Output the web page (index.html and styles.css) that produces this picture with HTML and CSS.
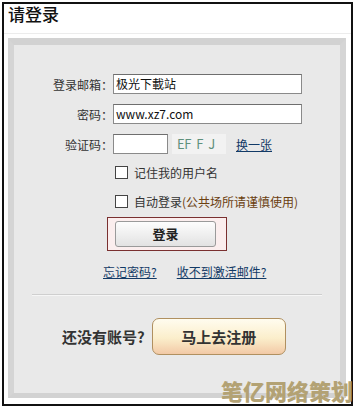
FILE: index.html
```html
<!DOCTYPE html>
<html lang="zh">
<head>
<meta charset="utf-8">
<link rel="stylesheet" href="styles.css">
</head>
<body>
<div class="frame">
  <div class="header"><h1 class="title">请登录</h1></div>
  <div class="panel">
    <div class="form">
      <div class="row">
        <span class="label">登录邮箱：</span>
        <span class="input wide">极光下載站</span>
      </div>
      <div class="row">
        <span class="label">密码：</span>
        <span class="input wide">www.xz7.com</span>
      </div>
      <div class="row">
        <span class="label">验证码：</span>
        <span class="input short"></span>
        <span class="captcha">EF F J</span>
        <a class="link change">换一张</a>
      </div>
      <div class="check-row">
        <span class="box"></span><span class="check-text">记住我的用户名</span>
      </div>
      <div class="check-row second">
        <span class="box"></span><span class="check-text">自动登录<span class="warn">(公共场所请谨慎使用)</span></span>
      </div>
      <div class="btn-wrap">
        <div class="login-btn">登录</div>
      </div>
      <div class="links">
        <a class="link">忘记密码?</a>
        <a class="link">收不到激活邮件?</a>
      </div>
    </div>
    <div class="divider"></div>
    <div class="register">
      <span class="ask">还没有账号?</span>
      <div class="reg-btn">马上去注册</div>
    </div>
  </div>
  <div class="watermark">笔亿网络策划</div>
</div>
</body>
</html>
```
FILE: styles.css
```css
* { box-sizing: border-box; }
html, body { margin: 0; padding: 0; background: #fff; }
body {
  width: 354px; height: 408px; overflow: hidden;
  font-family: "Noto Sans CJK SC", "Noto Sans", sans-serif;
  font-size: 12px; color: #333;
}
.frame {
  position: relative;
  margin: 2px 0 0 2px;
  width: 351px; height: 404px;
  border: 2px solid #111;
  background: #fff;
  display: flex; flex-direction: column;
}
.header {
  height: 30px;
  border-bottom: 1px solid #ececec;
  padding-left: 4px;
}
.title {
  margin: 0;
  font-size: 17px; font-weight: 500; line-height: 18px;
  color: #111;
  padding-top: 1px;
}
.panel {
  margin: 4px 0 0 4px;
  width: 338px; height: 360px;
  background: #e9e9e9;
  border-left: 6px solid #d5d5d5;
  border-top: 7px solid #d2d2d2;
  border-right: 6px solid #d5d5d5;
  border-bottom: 5px solid #d2d2d2;
  display: flex; flex-direction: column;
}
.form { padding-top: 29px; }
.row {
  display: flex; align-items: center;
  height: 20px; margin-bottom: 10px;
}
.label {
  width: 99px; text-align: right;
  font-size: 12px; color: #333;
}
.input {
  height: 20px;
  border: 1px solid #8a8a8a;
  border-top-color: #6e6e6e;
  background: #fff;
  font-size: 12px; line-height: 18px; color: #111;
  padding-left: 2px;
}
.wide { width: 189px; }
.short { width: 55px; }
.captcha {
  margin-left: 4px; width: 54px; height: 20px;
  background: #f2f2f2;
  color: #5f907c; font-size: 13px; line-height: 20px;
  padding-left: 5px; letter-spacing: -0.5px; word-spacing: 3px;
}
.link {
  color: #123a66; text-decoration: underline; font-size: 12px;
}
.change { margin-left: 10px; }
.check-row {
  display: flex; align-items: center;
  margin-left: 101px; margin-top: 3px; height: 16px;
}
.check-row.second { margin-top: 13px; }
.box {
  width: 13px; height: 13px;
  border: 1px solid #444; background: #fff;
}
.check-text { margin-left: 6px; font-size: 12px; color: #333; }
.warn { color: #6b4010; }
.btn-wrap {
  margin: 8px 0 0 93px;
  width: 120px; height: 34px;
  border: 1px solid #7a3030;
  background: #fbeeee;
  padding: 3px 0 0 7px;
}
.login-btn {
  width: 101px; height: 26px;
  border: 1px solid #9a9a9a; border-radius: 3px;
  background: linear-gradient(#fdfdfd, #e2e2e2);
  text-align: center; font-size: 13px; font-weight: 700; line-height: 24px;
  color: #222;
}
.links {
  display: flex; gap: 20px;
  margin: 12px 0 0 89px;
  height: 18px;
}
.divider {
  margin: 13px 0 0 18px;
  width: 290px; height: 2px;
  border-top: 1px solid #cfcfcf;
  border-bottom: 1px solid #f6f6f6;
}
.register {
  display: flex; align-items: center;
  margin: 22px 0 0 48px;
}
.ask { font-size: 15px; font-weight: 700; color: #333; }
.reg-btn {
  margin-left: 7px;
  width: 134px; height: 37px;
  border: 1px solid #b09060; border-radius: 7px;
  background: linear-gradient(#fffcef, #fbeecb 55%, #f2c9a6);
  text-align: center; font-size: 15px; font-weight: 700; line-height: 35px;
  color: #333;
}
.watermark {
  position: absolute; right: -2px; bottom: 0px;
  font-size: 22px; font-weight: 900; color: #b3a274;
  letter-spacing: 0; line-height: 28px;
}
```
